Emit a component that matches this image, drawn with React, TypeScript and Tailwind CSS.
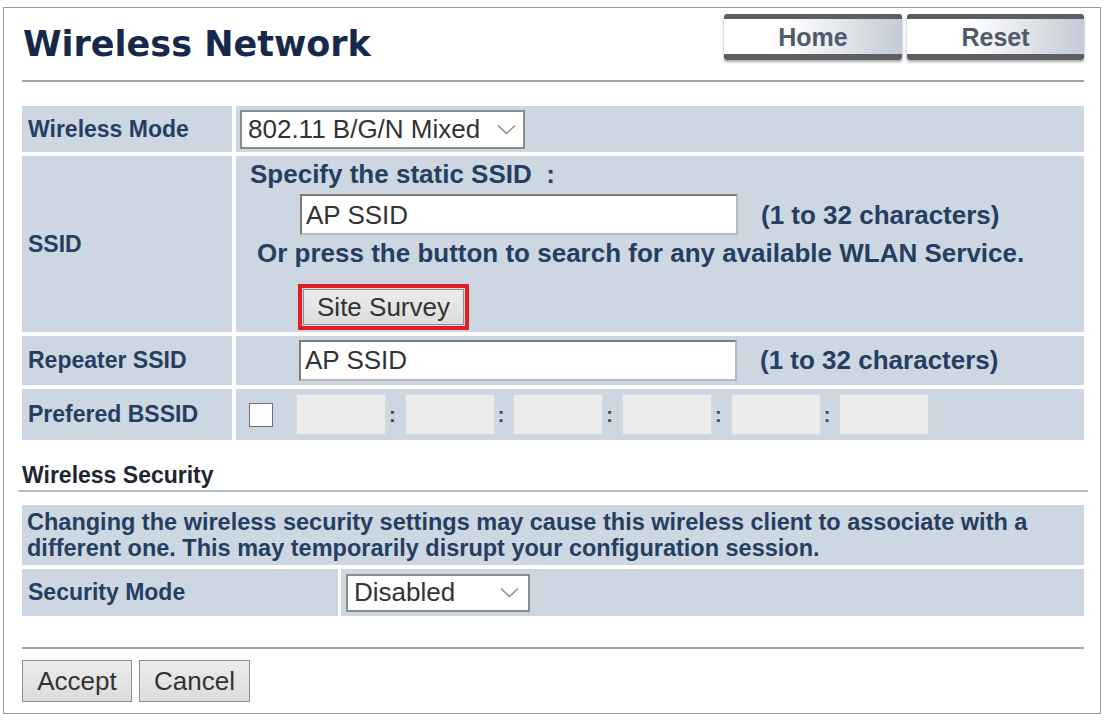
import React from 'react';

// Shared cell styles for the settings tables
const cellBg = 'bg-[#cdd7e1]';
const labelCell = `${cellBg} flex items-center pl-[6px] text-[23px] font-bold text-[#263e62]`;
const boldText = 'text-[26px] font-bold text-[#263e62]';

const Chevron: React.FC = () => (
    <svg width="19" height="11" viewBox="0 0 19 11" className="shrink-0">
        <path d="M1 1.5l8.5 8 8.5-8" fill="none" stroke="#8a8a8a" strokeWidth="1.4" />
    </svg>
);

const TextInput: React.FC<{ value: string }> = ({ value }) => (
    <div className="flex h-[41px] w-[438px] items-center border-2 border-t-[#7c7c7c] border-l-[#7c7c7c] border-b-[#b8b8b8] border-r-[#b8b8b8] bg-white pl-[4px] text-[26px] text-[#333]">
        {value}
    </div>
);

const GreyButton: React.FC<{ label: string; className?: string }> = ({ label, className }) => (
    <button
        className={`flex items-center justify-center border border-[#8f8f8f] bg-linear-to-b from-[#ececec] to-[#dcdcdc] text-[26px] text-[#333] ${className ?? ''}`}
    >
        {label}
    </button>
);

const NavButton: React.FC<{ label: string; className: string }> = ({ label, className }) => (
    <div
        className={`flex h-[46px] items-center justify-center rounded-[3px] border-t-[5px] border-b-[6px] border-[#5d5f63] bg-linear-to-r from-white from-35% to-[#c4cbd5] pt-[2px] shadow-[0_2px_3px_rgba(0,0,0,0.35)] text-[25px] font-bold text-[#505b6c] ${className}`}
    >
        {label}
    </div>
);

const MacField: React.FC = () => (
    <div className="h-[41px] w-[90px] border border-[#d9d9d9] bg-[#ebebeb]" />
);

const Colon: React.FC = () => (
    <span className="ml-[3px] mr-[9px] text-[20px] font-bold text-[#444]">:</span>
);

export default function App() {
    return (
        <div className="min-h-[721px] bg-white pl-[3px] pt-[7px] font-['Liberation_Sans',Arial,sans-serif]">
            <div className="h-[707px] w-[1098px] border border-[#9b9b9b] pl-[18px] pr-[16px]">
                {/* Header */}
                <div className="flex h-[72px] items-start justify-between pt-[6px]">
                    <h1 className="ml-[1px] mt-[13px] font-['DejaVu_Sans',Verdana,sans-serif] text-[35px] font-bold leading-none text-[#16294a]">
                        Wireless Network
                    </h1>
                    <div className="flex gap-[5px]">
                        <NavButton label="Home" className="w-[178px]" />
                        <NavButton label="Reset" className="w-[177px]" />
                    </div>
                </div>
                <div className="h-[2px] bg-[#9ea5ae]" />

                {/* Wireless settings */}
                <div className="mt-[24px] grid grid-cols-[210px_1fr] grid-rows-[46px_176px_49px_51px] gap-x-[4px] gap-y-[4px]">
                    <div className={labelCell}>Wireless Mode</div>
                    <div className={`${cellBg} flex items-center pl-[4px]`}>
                        <div className="flex h-[39px] w-[285px] items-center justify-between border-2 border-[#8c8c8c] bg-white pl-[6px] pr-[7px] text-[26px] text-[#333]">
                            <span>802.11 B/G/N Mixed</span>
                            <Chevron />
                        </div>
                    </div>

                    <div className={labelCell}>SSID</div>
                    <div className={`${cellBg} pt-[3px] leading-[30px]`}>
                        <div className={`ml-[14px] ${boldText}`}>Specify the static SSID&nbsp;&nbsp;:</div>
                        <div className="ml-[64px] mt-[5px] flex items-center">
                            <TextInput value="AP SSID" />
                            <span className={`ml-[23px] ${boldText}`}>(1 to 32 characters)</span>
                        </div>
                        <div className={`ml-[21px] mt-[3px] ${boldText}`}>
                            Or press the button to search for any available WLAN Service.
                        </div>
                        <div className="ml-[62px] mt-[16px] h-[46px] w-[171px] border-4 border-[#e01e24] p-[1px]">
                            <GreyButton label="Site Survey" className="h-full w-full" />
                        </div>
                    </div>

                    <div className={labelCell}>Repeater SSID</div>
                    <div className={`${cellBg} flex items-center pl-[63px]`}>
                        <TextInput value="AP SSID" />
                        <span className={`ml-[23px] ${boldText}`}>(1 to 32 characters)</span>
                    </div>

                    <div className={labelCell}>Prefered BSSID</div>
                    <div className={`${cellBg} flex items-center pl-[13px]`}>
                        <div className="mr-[23px] h-[24px] w-[24px] border border-[#6f6f6f] bg-white" />
                        <MacField />
                        <Colon />
                        <MacField />
                        <Colon />
                        <MacField />
                        <Colon />
                        <MacField />
                        <Colon />
                        <MacField />
                        <Colon />
                        <MacField />
                    </div>
                </div>

                {/* Security */}
                <div className="mt-[22px] text-[23px] font-bold leading-[26px] text-[#1f2633]">Wireless Security</div>
                <div className="-mx-[4px] mt-[2px] h-[2px] bg-[#b3bac3]" />

                <div className="mt-[13px] grid grid-cols-[316px_1fr] grid-rows-[60px_47px] gap-x-[3px] gap-y-[4px]">
                    <div className={`${cellBg} col-span-2 flex items-center pl-[5px] text-[23.5px] font-bold leading-[26px] text-[#263e62]`}>
                        Changing the wireless security settings may cause this wireless client to associate with a different one. This may temporarily disrupt your configuration session.
                    </div>
                    <div className={labelCell}>Security Mode</div>
                    <div className={`${cellBg} flex items-center pl-[5px]`}>
                        <div className="flex h-[38px] w-[184px] items-center justify-between border-2 border-[#8c8c8c] bg-white pl-[6px] pr-[9px] text-[26px] text-[#333]">
                            <span>Disabled</span>
                            <Chevron />
                        </div>
                    </div>
                </div>

                <div className="mt-[31px] h-[2px] bg-[#9ea5ae]" />
                <div className="mt-[11px] flex gap-[7px]">
                    <GreyButton label="Accept" className="h-[42px] w-[110px]" />
                    <GreyButton label="Cancel" className="h-[42px] w-[111px]" />
                </div>
            </div>
        </div>
    );
}
